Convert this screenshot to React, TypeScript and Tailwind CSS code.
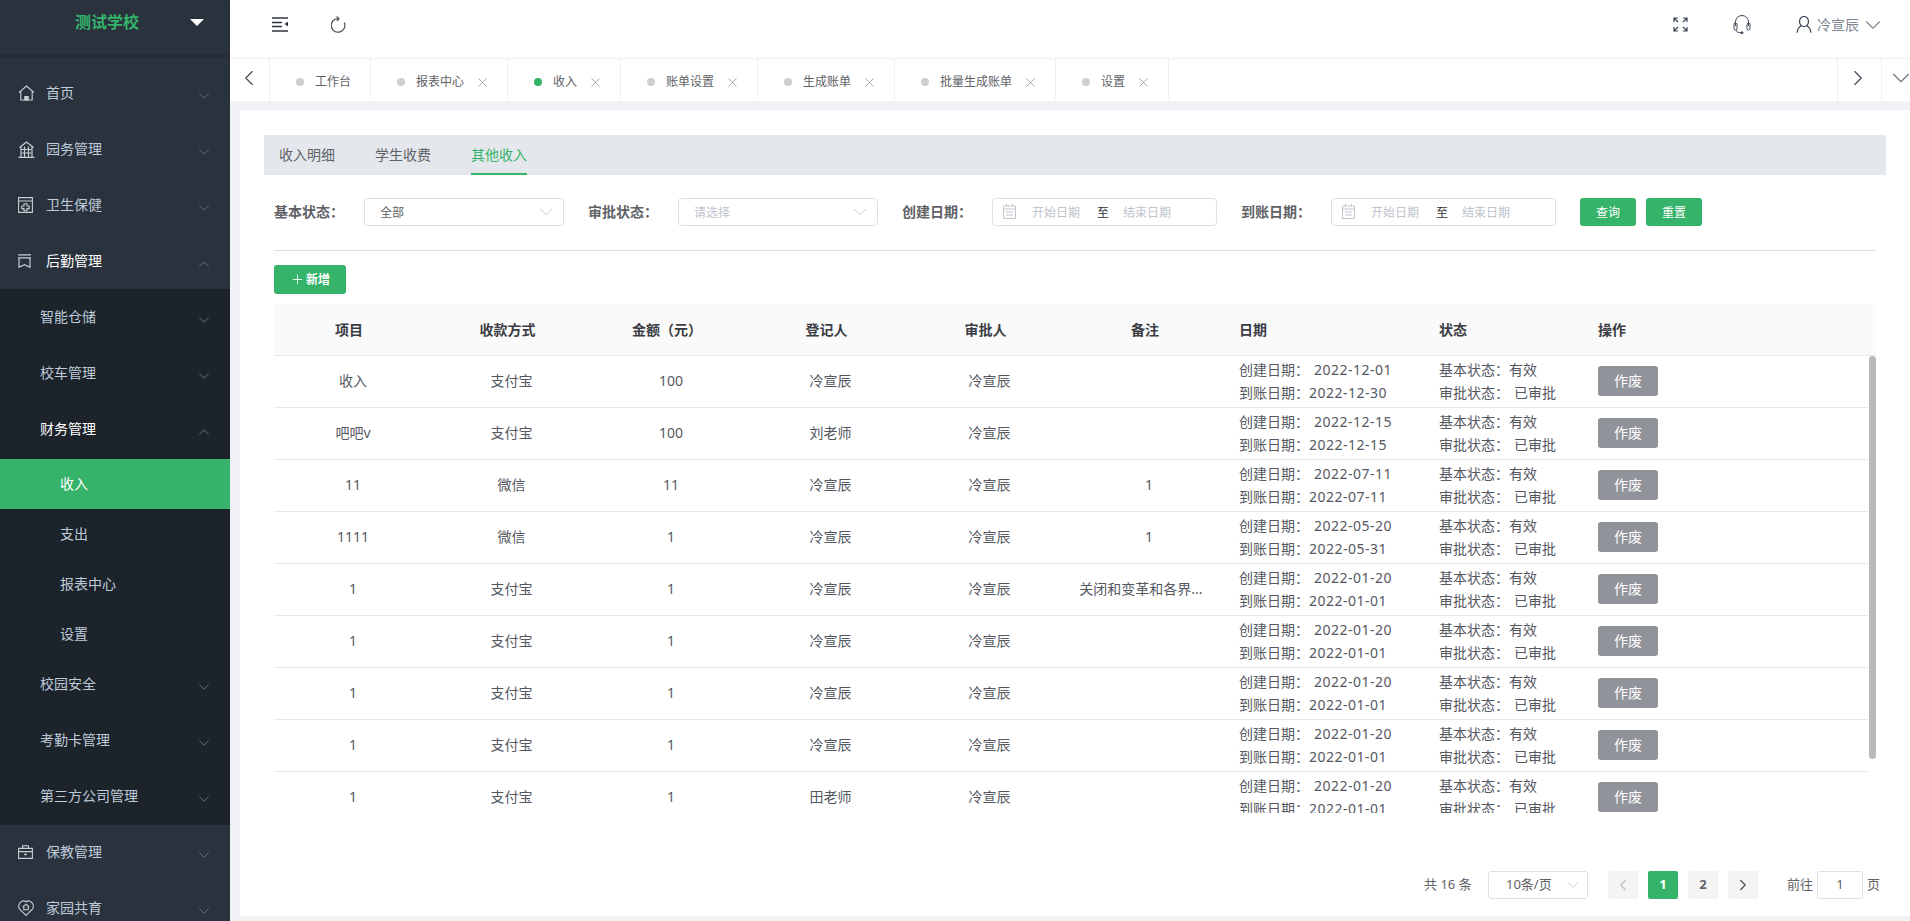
import type { ReactNode } from "react"
import { ChevronDown, ChevronLeft, ChevronRight, ChevronUp, Plus, X } from "lucide-react"

const rows = [
  { name: "收入", pay: "支付宝", amount: "100", reg: "冷宣辰", remark: "", created: "2022-12-01", arrived: "2022-12-30" },
  { name: "吧吧v", pay: "支付宝", amount: "100", reg: "刘老师", remark: "", created: "2022-12-15", arrived: "2022-12-15" },
  { name: "11", pay: "微信", amount: "11", reg: "冷宣辰", remark: "1", created: "2022-07-11", arrived: "2022-07-11" },
  { name: "1111", pay: "微信", amount: "1", reg: "冷宣辰", remark: "1", created: "2022-05-20", arrived: "2022-05-31" },
  { name: "1", pay: "支付宝", amount: "1", reg: "冷宣辰", remark: "关闭和变革和各界...", created: "2022-01-20", arrived: "2022-01-01" },
  { name: "1", pay: "支付宝", amount: "1", reg: "冷宣辰", remark: "", created: "2022-01-20", arrived: "2022-01-01" },
  { name: "1", pay: "支付宝", amount: "1", reg: "冷宣辰", remark: "", created: "2022-01-20", arrived: "2022-01-01" },
  { name: "1", pay: "支付宝", amount: "1", reg: "冷宣辰", remark: "", created: "2022-01-20", arrived: "2022-01-01" },
  { name: "1", pay: "支付宝", amount: "1", reg: "田老师", remark: "", created: "2022-01-20", arrived: "2022-01-01" },
]

const tabs = [
  { label: "工作台", closable: false },
  { label: "报表中心", closable: true },
  { label: "收入", closable: true, active: true },
  { label: "账单设置", closable: true },
  { label: "生成账单", closable: true },
  { label: "批量生成账单", closable: true },
  { label: "设置", closable: true },
]

const gridCols = "grid grid-cols-[158px_159px_160px_159px_159px_160px_200px_159px_1fr]"

function HomeIcon() {
  return (
    <svg width="17" height="16" viewBox="0 0 17 16" fill="none" stroke="#c9ced4" strokeWidth="1.100">
      <path d="M1 7.500 8.500 1 16 7.500M2.800 6.200V15h11.400V6.200" />
      <path d="M6.800 15v-3.400h3.400V15z" fill="#c9ced4" />
    </svg>
  )
}

function BuildingIcon() {
  return (
    <svg width="17" height="17" viewBox="0 0 17 17" fill="none" stroke="#c9ced4" strokeWidth="1.200">
      <path d="M1.500 6.500 8.500 1l7 5.500M3 5.800V16M14 5.800V16M.5 16.300h16M6.500 16V5.500M10.500 16V5.500" />
      <path d="M3.500 8.500h10M3.500 12h10" />
    </svg>
  )
}

function HealthIcon() {
  return (
    <svg width="15" height="16" viewBox="0 0 15 16" fill="none" stroke="#c9ced4" strokeWidth="1.100">
      <path d="M.6.600h13.800v14.800H.6zM.6 4h13.800" />
      <path d="M6 6.800h3v2.200h2.200v2.600H9v2.200H6v-2.200H3.800V9H6z" />
    </svg>
  )
}

function LogisticsIcon() {
  return (
    <svg width="13" height="14" viewBox="0 0 13 14" fill="none" stroke="#c9ced4" strokeWidth="1.200">
      <path d="M0 .8h13M0 3.800h13M1 3.800v9.400l5.500-2.600 5.500 2.600V3.800" />
    </svg>
  )
}

function CaseIcon() {
  return (
    <svg width="15" height="14" viewBox="0 0 15 14" fill="none" stroke="#c9ced4" strokeWidth="1.100">
      <path d="M.6 3.400h13.800v10H.6zM4.600 3.400V.8h5.800v2.600M.6 6.600h13.800" />
      <path d="M6.200 9.400h2.600" strokeWidth="1.600" />
    </svg>
  )
}

function ShieldHomeIcon() {
  return (
    <svg width="16" height="16" viewBox="0 0 16 16" fill="none" stroke="#c9ced4" strokeWidth="1.100">
      <path d="M8 15.400 1.600 9.200C-.2 6.400.8 2.400 4 1.200 5.600.6 7 1 8 1.800c1-.8 2.400-1.200 4-.6 3.200 1.200 4.200 5.200 2.400 8z" />
      <path d="M4.800 7 8 4.200 11.200 7M5.800 6.400v3.400h4.400V6.400" />
    </svg>
  )
}

function Arrow({ open }: { open?: boolean }) {
  return open ? (
    <ChevronUp className="mt-[5px] -mr-[4px] ml-auto h-[18px] w-[18px] text-[#66717e]" strokeWidth={1.300} />
  ) : (
    <ChevronDown className="mt-[5px] -mr-[4px] ml-auto h-[18px] w-[18px] text-[#66717e]" strokeWidth={1.300} />
  )
}

function MenuIcon({ label, icon, open, bright }: { label: string; icon: ReactNode; open?: boolean; bright?: boolean }) {
  return (
    <div className={`flex h-[56px] items-center pr-[21px] pl-[18px] text-sm ${bright ? "text-white" : "text-[#bfcbd9]"}`}>
      <span className="flex w-[28px] justify-start">{icon}</span>
      <span>{label}</span>
      <Arrow open={open} />
    </div>
  )
}

function SubMenu({ label, open, bright }: { label: string; open?: boolean; bright?: boolean }) {
  return (
    <div className={`flex h-[56px] items-center pr-[21px] pl-[40px] text-sm ${bright ? "text-white" : "text-[#bfcbd9]"}`}>
      <span>{label}</span>
      <Arrow open={open} />
    </div>
  )
}

function Leaf({ label, active }: { label: string; active?: boolean }) {
  return (
    <div className={`flex h-[50px] items-center pl-[60px] text-sm ${active ? "bg-[#35b36a] text-white" : "text-[#bfcbd9]"}`}>
      {label}
    </div>
  )
}

function Sidebar() {
  return (
    <aside className="h-full w-[230px] shrink-0 overflow-hidden bg-[#29323d]">
      <div className="relative flex h-[57px] items-start justify-center border-b-2 border-[#232b35] pt-[11px] pr-[16px] text-base leading-[22px] font-bold text-[#35b36a]">
        测试学校
        <span className="absolute top-[19px] left-[190px] h-0 w-0 border-x-[7.5px] border-t-[7px] border-x-transparent border-t-white" />
      </div>
      <div className="pt-[8px]">
        <MenuIcon label="首页" icon={<HomeIcon />} />
        <MenuIcon label="园务管理" icon={<BuildingIcon />} />
        <MenuIcon label="卫生保健" icon={<HealthIcon />} />
        <MenuIcon label="后勤管理" icon={<LogisticsIcon />} open bright />
        <div className="mt-[2px] h-[536px] bg-[#1c232b]">
          <div className="-mt-[2px]">
            <SubMenu label="智能仓储" />
            <SubMenu label="校车管理" />
            <SubMenu label="财务管理" open bright />
            <div className="mt-[2px]">
              <Leaf label="收入" active />
              <Leaf label="支出" />
              <Leaf label="报表中心" />
              <Leaf label="设置" />
            </div>
            <div className="-mt-[3px]">
              <SubMenu label="校园安全" />
              <SubMenu label="考勤卡管理" />
              <SubMenu label="第三方公司管理" />
            </div>
          </div>
        </div>
        <div className="-mt-[1px]">
          <MenuIcon label="保教管理" icon={<CaseIcon />} />
          <MenuIcon label="家园共育" icon={<ShieldHomeIcon />} />
        </div>
      </div>
    </aside>
  )
}

function TopBar() {
  return (
    <header className="relative z-10 flex h-[57px] items-center bg-white pb-[8px] shadow-[0_1px_4px_rgba(0,21,41,0.08)]">
      <svg className="ml-[42px]" width="16" height="15" viewBox="0 0 16 15" fill="none" stroke="#2f3540" strokeWidth="1.600">
        <path d="M0 1h16M0 5.500h10M0 9.500h10M0 14h16" />
        <path d="M16 4.500v5l-3.500-2.500z" fill="#2f3540" stroke="none" />
      </svg>
      <svg className="ml-[43px]" width="15" height="17" viewBox="0 0 15 17" fill="none" stroke="#4a505a" strokeWidth="1.200">
        <path d="M7 2.600A6.800 6.800 0 1 0 13.200 6.500" />
        <path d="M5.600.5 8 2.600 6 5" />
      </svg>
      <div className="ml-auto flex items-center">
        <svg width="15" height="15" viewBox="0 0 15 15" fill="none" stroke="#3a4452" strokeWidth="1.200">
          <path d="M1 5V1h4M1 1l4 4M10 1h4v4M14 1l-4 4M1 10v4h4M1 14l4-4M14 10v4h-4M14 14l-4-4" />
        </svg>
        <svg className="ml-[45px]" width="18" height="19" viewBox="0 0 18 19" fill="none" stroke="#3a4452" strokeWidth="1">
          <path d="M2.500 11V7a6.500 6.500 0 0 1 13 0v4" />
          <rect x="1" y="8" width="3" height="7" rx="1.400" />
          <rect x="14" y="8" width="3" height="7" rx="1.400" />
          <path d="M3 15c.5 2 2.500 2.800 5 2.800" />
          <circle cx="9" cy="17.800" r="1" fill="#3a4452" />
        </svg>
        <svg className="ml-[45px]" width="16" height="17" viewBox="0 0 16 17" fill="none" stroke="#3a4452" strokeWidth="1.200">
          <ellipse cx="8" cy="5.500" rx="4.500" ry="5" />
          <path d="M5.500 9.500C3 11 1.200 13.500 1 16.800M10.500 9.500c2.500 1.500 4.300 4 4.500 7.300" />
        </svg>
        <span className="ml-[5px] text-sm text-[#808490]">冷宣辰</span>
        <ChevronDown className="mr-[24px] ml-[1px] h-[26px] w-[26px] text-[#808490]" strokeWidth={1} />
      </div>
    </header>
  )
}

function TabBar() {
  return (
    <div className="flex h-[44px] bg-white text-xs text-[#606266]">
      <div className="flex w-[40px] items-start justify-center border-r border-[#eef0f3] pt-[8px] pr-[2px]">
        <ChevronLeft className="h-[26px] w-[26px] text-[#3f4652]" strokeWidth={1} />
      </div>
      {tabs.map((tab) => (
        <div key={tab.label} className="my-[2px] flex items-center border-r border-[#eef0f3] pt-[6px] pr-[19px] pl-[26px]">
          <span className={`h-[8px] w-[8px] rounded-full ${tab.active ? "bg-[#35b36a]" : "bg-[#cfcfd1]"}`} />
          <span className="ml-[11px]">{tab.label}</span>
          {tab.closable && <X className="-mr-[2px] ml-[11px] h-[15px] w-[15px] text-[#8a8d94]" strokeWidth={1.200} />}
        </div>
      ))}
      <div className="ml-auto flex w-[44px] items-start justify-center border-l border-[#eef0f3] pt-[8px] pr-[4px]">
        <ChevronRight className="h-[26px] w-[26px] text-[#3f4652]" strokeWidth={1} />
      </div>
      <div className="flex w-[29px] items-start justify-start overflow-hidden border-l border-[#eef0f3] pt-[6px] pl-[4px]">
        <ChevronDown className="h-[30px] w-[30px] shrink-0 text-[#6d737d]" strokeWidth={0.900} />
      </div>
    </div>
  )
}

function CalendarIcon() {
  return (
    <svg className="mb-[2px]" width="13" height="15" viewBox="0 0 13 15" fill="none" stroke="#c0c4cc" strokeWidth="1">
      <path d="M.5 2h12v12.500H.5zM.5 5h12M3 8h7M3 11h7M3.500 0v2M9.500 0v2" />
    </svg>
  )
}

function SelectBox({ text, placeholder, width }: { text: string; placeholder?: boolean; width: string }) {
  return (
    <div className={`flex h-[28px] items-center rounded-[4px] border border-[#dcdfe6] pr-[6px] pl-[15px] text-xs ${width} ${placeholder ? "text-[#c0c4cc]" : "text-[#606266]"}`}>
      <span className="pt-[1px]">{text}</span>
      <ChevronDown className="ml-auto h-[22px] w-[22px] text-[#c0c4cc]" strokeWidth={1} />
    </div>
  )
}

function DateBox() {
  return (
    <div className="flex h-[28px] w-[225px] items-center rounded-[4px] border border-[#dcdfe6] pl-[10px] text-xs text-[#c0c4cc]">
      <CalendarIcon />
      <span className="ml-[16px] pt-[1px]">开始日期</span>
      <span className="ml-[17px] pt-[1px] text-[#303133]">至</span>
      <span className="ml-[14px] pt-[1px]">结束日期</span>
    </div>
  )
}

function Label({ children, className }: { children: ReactNode; className?: string }) {
  return <span className={`text-sm leading-[28px] font-bold text-[#606266] ${className ?? ""}`}>{children}</span>
}

function FilterRow() {
  return (
    <div className="mt-[23px] flex items-center pl-[34px]">
      <Label className="w-[90px]">基本状态：</Label>
      <SelectBox text="全部" width="w-[200px]" />
      <Label className="ml-[24px] w-[90px]">审批状态：</Label>
      <SelectBox text="请选择" placeholder width="w-[200px]" />
      <Label className="ml-[24px] w-[90px]">创建日期：</Label>
      <DateBox />
      <Label className="ml-[24px] w-[90px]">到账日期：</Label>
      <DateBox />
      <button className="ml-[24px] h-[28px] w-[56px] rounded-[3px] bg-[#35b36a] pt-[1px] text-xs text-white">查询</button>
      <button className="ml-[10px] h-[28px] w-[56px] rounded-[3px] bg-[#35b36a] pt-[1px] text-xs text-white">重置</button>
    </div>
  )
}

function Table() {
  return (
    <div className="mx-[34px] mt-[10px]">
      <div className={`${gridCols} h-[52px] items-center border-b border-[#e6e8eb] bg-[#fafafa] text-sm font-bold text-[#3a3d44]`}>
        {["项目", "收款方式", "金额（元）", "登记人", "审批人", "备注"].map((h) => (
          <div key={h} className="pr-[8px] text-center">{h}</div>
        ))}
        <div className="pl-[10px]">日期</div>
        <div className="pl-[10px]">状态</div>
        <div className="pl-[10px]">操作</div>
      </div>
      <div className="relative h-[457px] overflow-hidden">
        <div className="absolute top-0 right-0 h-[403px] w-[7px] rounded-[4px] bg-[#b9b9b9]" />
        <div className="mr-[8px]">
          {rows.map((row, i) => (
            <div key={i} className={`${gridCols} h-[52px] items-center border-b border-[#e6e8eb] pt-[1px] text-sm text-[#55585f]`}>
              <div className="text-center">{row.name}</div>
              <div className="text-center">{row.pay}</div>
              <div className="text-center">{row.amount}</div>
              <div className="text-center">{row.reg}</div>
              <div className="text-center">冷宣辰</div>
              <div className={`text-center ${row.remark.length > 1 ? "pr-[16px]" : ""}`}>{row.remark}</div>
              <div className="pl-[10px] leading-[23px]">
                <div>创建日期：<span className="ml-[5px] tracking-[0.5px]">{row.created}</span></div>
                <div>到账日期：<span className="tracking-[0.5px]">{row.arrived}</span></div>
              </div>
              <div className="pl-[10px] leading-[23px]">
                <div>基本状态：有效</div>
                <div>审批状态：<span className="ml-[5px]">已审批</span></div>
              </div>
              <div className="pl-[10px]">
                <button className="h-[30px] w-[60px] rounded-[3px] bg-[#91939a] text-sm text-white">作废</button>
              </div>
              <div />
            </div>
          ))}
        </div>
      </div>
    </div>
  )
}

function Pagination() {
  return (
    <div className="mt-[58px] flex h-[28px] items-center pl-[1184px] text-[13px] text-[#606266]">
      <span className="w-[64px]">共 16 条</span>
      <div className="flex h-[28px] w-[100px] items-center rounded-[3px] border border-[#dcdfe6] pr-[5px] pl-[17px]">
        10条/页
        <ChevronDown className="ml-auto h-[18px] w-[18px] text-[#c0c4cc]" strokeWidth={1.200} />
      </div>
      <div className="ml-[20px] flex h-[28px] w-[30px] items-center justify-center rounded-[2px] bg-[#f4f4f5]">
        <ChevronLeft className="h-[18px] w-[18px] text-[#c0c4cc]" strokeWidth={2} />
      </div>
      <div className="ml-[10px] flex h-[28px] w-[30px] items-center justify-center rounded-[2px] bg-[#35b36a] font-bold text-white">1</div>
      <div className="ml-[10px] flex h-[28px] w-[30px] items-center justify-center rounded-[2px] bg-[#f4f4f5] font-bold">2</div>
      <div className="ml-[10px] flex h-[28px] w-[30px] items-center justify-center rounded-[2px] bg-[#f4f4f5]">
        <ChevronRight className="h-[18px] w-[18px] text-[#606266]" strokeWidth={2} />
      </div>
      <span className="ml-[29px]">前往</span>
      <div className="ml-[4px] flex h-[28px] w-[46px] items-center justify-center rounded-[3px] border border-[#dcdfe6]">1</div>
      <span className="ml-[4px]">页</span>
    </div>
  )
}

export default function App() {
  return (
    <div className="flex h-[921px] w-[1910px] overflow-hidden bg-[#f0f2f5] font-['Noto_Sans','Noto_Sans_CJK_SC',sans-serif]">
      <Sidebar />
      <div className="flex min-w-0 flex-1 flex-col">
        <TopBar />
        <TabBar />
        <main className="mt-[9px] ml-[10px] h-[806px] bg-white pt-[25px]">
          <div className="mx-[24px] flex h-[40px] gap-[40px] bg-[#e4e7ec] pl-[15px] text-sm text-[#606266]">
            <span className="leading-[40px]">收入明细</span>
            <span className="leading-[40px]">学生收费</span>
            <span className="border-b-2 border-[#35b36a] leading-[40px] text-[#35b36a]">其他收入</span>
          </div>
          <FilterRow />
          <div className="mx-[34px] mt-[24px] border-b border-[#dcdfe6]" />
          <button className="mt-[14px] ml-[34px] flex h-[29px] w-[72px] items-center justify-center rounded-[3px] bg-[#35b36a] text-xs font-bold text-white">
            <Plus className="mr-[1px] h-[15px] w-[15px]" strokeWidth={1.400} />
            新增
          </button>
          <Table />
          <Pagination />
        </main>
      </div>
    </div>
  )
}
